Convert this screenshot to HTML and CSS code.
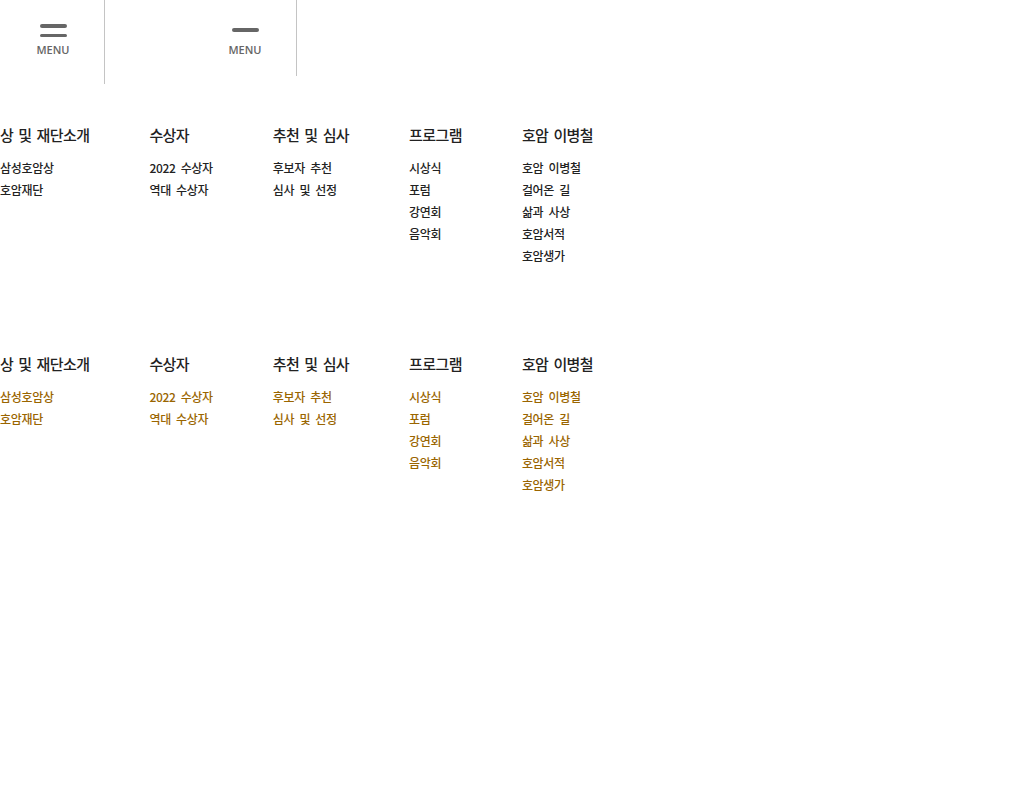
FILE: index.html
```html
<!DOCTYPE html>
<html lang="ko">
<head>
<meta charset="utf-8">
<title>Menu</title>
<link rel="stylesheet" href="styles.css">
</head>
<body>
<header class="topbar">
  <button class="menu-btn menu-btn--open" type="button">
    <span class="bars"><i></i><i></i></span>
    <span class="label">MENU</span>
  </button>
  <button class="menu-btn menu-btn--close" type="button">
    <span class="inner">
      <span class="bars"><i></i></span>
      <span class="label">MENU</span>
    </span>
  </button>
</header>

<nav class="gnb gnb--first">
  <div class="col">
    <h2>상 및 재단소개</h2>
    <ul><li>삼성호암상</li><li>호암재단</li></ul>
  </div>
  <div class="col">
    <h2>수상자</h2>
    <ul><li>2022 수상자</li><li>역대 수상자</li></ul>
  </div>
  <div class="col">
    <h2>추천 및 심사</h2>
    <ul><li>후보자 추천</li><li>심사 및 선정</li></ul>
  </div>
  <div class="col">
    <h2>프로그램</h2>
    <ul><li>시상식</li><li>포럼</li><li>강연회</li><li>음악회</li></ul>
  </div>
  <div class="col">
    <h2>호암 이병철</h2>
    <ul><li>호암 이병철</li><li>걸어온 길</li><li>삶과 사상</li><li>호암서적</li><li>호암생가</li></ul>
  </div>
</nav>

<nav class="gnb gnb--second gnb--gold">
  <div class="col">
    <h2>상 및 재단소개</h2>
    <ul><li>삼성호암상</li><li>호암재단</li></ul>
  </div>
  <div class="col">
    <h2>수상자</h2>
    <ul><li>2022 수상자</li><li>역대 수상자</li></ul>
  </div>
  <div class="col">
    <h2>추천 및 심사</h2>
    <ul><li>후보자 추천</li><li>심사 및 선정</li></ul>
  </div>
  <div class="col">
    <h2>프로그램</h2>
    <ul><li>시상식</li><li>포럼</li><li>강연회</li><li>음악회</li></ul>
  </div>
  <div class="col">
    <h2>호암 이병철</h2>
    <ul><li>호암 이병철</li><li>걸어온 길</li><li>삶과 사상</li><li>호암서적</li><li>호암생가</li></ul>
  </div>
</nav>
</body>
</html>
```
FILE: styles.css
```css
* { box-sizing: border-box; }
html, body { margin: 0; padding: 0; background: #fff; }
body {
  font-family: "Noto Sans CJK KR", "Noto Sans", sans-serif;
  color: #222;
}

.topbar {
  display: flex;
  align-items: flex-start;
}

.menu-btn {
  display: flex;
  flex-direction: column;
  align-items: center;
  border: 0;
  border-right: 1px solid #c4c4c4;
  background: transparent;
  padding: 0;
  margin: 0;
  cursor: pointer;
  font: inherit;
}

.menu-btn--open {
  width: 105px;
  height: 84px;
  padding: 24px 0 0 2px;
}

.menu-btn--close {
  width: 192px;
  height: 76px;
  padding: 28px 0 0 123px;
  align-items: flex-start;
}

.menu-btn .inner {
  display: flex;
  flex-direction: column;
  align-items: center;
  width: 34px;
}

.bars {
  display: flex;
  flex-direction: column;
  gap: 6px;
  width: 27px;
}

.bars i {
  display: block;
  height: 3.5px;
  border-radius: 2px;
  background: #666;
}

.menu-btn--open .label { margin-top: 6px; }
.menu-btn--close .label { margin-top: 11px; }

.label {
  font-family: "Open Sans", "Liberation Sans", sans-serif;
  font-size: 11px;
  font-weight: 600;
  line-height: 14px;
  color: #666;
  letter-spacing: 0;
}

.gnb {
  display: flex;
  gap: 60px;
  align-items: flex-start;
}

.gnb--first { margin-top: 40px; }
.gnb--second { margin-top: 86px; }

.col h2 {
  margin: 0;
  font-size: 15px;
  font-weight: 500;
  line-height: 22px;
  letter-spacing: -0.6px;
  word-spacing: 1.5px;
  color: #222;
  white-space: nowrap;
}

.col ul {
  list-style: none;
  margin: 11px 0 0;
  padding: 0;
}

.col li {
  font-size: 12px;
  font-weight: 500;
  line-height: 22px;
  letter-spacing: -0.3px;
  word-spacing: 2px;
  white-space: nowrap;
  color: #222;
}

.gnb--gold .col li { color: #9a6500; }
```
